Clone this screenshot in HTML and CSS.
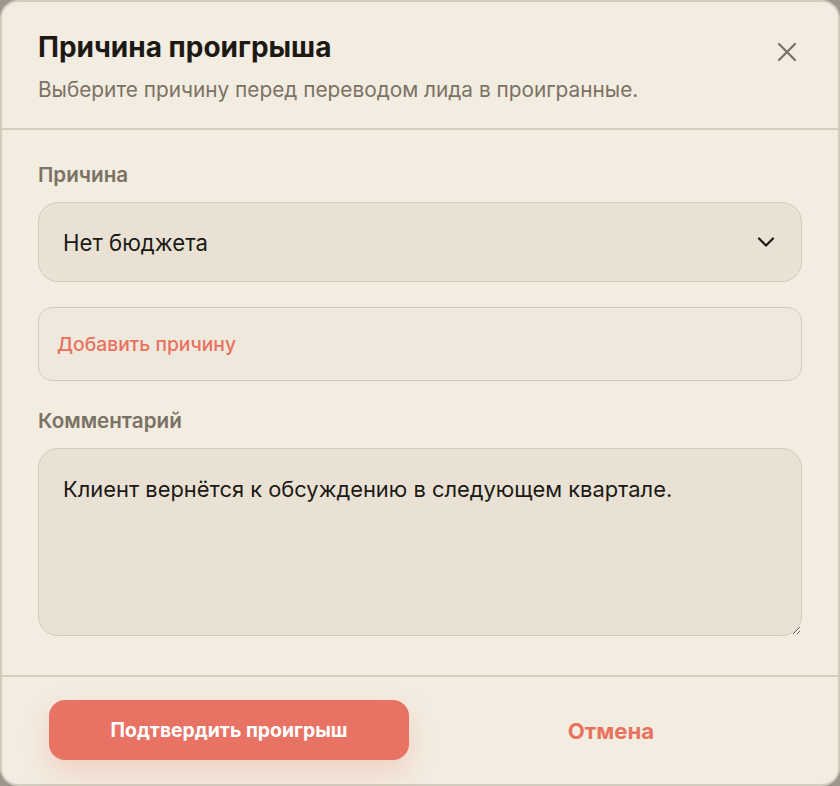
FILE: index.html
```html
<!DOCTYPE html>
<html lang="ru">
<head>
    <meta charset="UTF-8">
    <meta name="viewport" content="width=device-width, initial-scale=1.0">
    <title>Причина проигрыша</title>
    <link rel="stylesheet" href="styles.css">
</head>
<body>
    <div class="dialog">
        <div class="dialog-header">
            <div class="header-text">
                <h1>Причина проигрыша</h1>
                <p>Выберите причину перед переводом лида в проигранные.</p>
            </div>
            <button class="close-btn" aria-label="Закрыть">
                <svg width="20" height="20" viewBox="0 0 20 20" fill="none" stroke="currentColor" stroke-width="2.2" stroke-linecap="round">
                    <path d="M2 2 L18 18 M18 2 L2 18"/>
                </svg>
            </button>
        </div>

        <div class="dialog-body">
            <label class="field-label">Причина</label>
            <div class="select">
                <span>Нет бюджета</span>
                <svg width="18" height="10" viewBox="0 0 18 10" fill="none" stroke="currentColor" stroke-width="2.2" stroke-linecap="round" stroke-linejoin="round">
                    <path d="M2 1.5 L9 8.5 L16 1.5"/>
                </svg>
            </div>

            <div class="add-reason">Добавить причину</div>

            <label class="field-label">Комментарий</label>
            <textarea class="comment">Клиент вернётся к обсуждению в следующем квартале.</textarea>
        </div>

        <div class="dialog-footer">
            <div class="footer-col">
                <button class="confirm-btn">Подтвердить проигрыш</button>
            </div>
            <div class="footer-col">
                <button class="cancel-btn">Отмена</button>
            </div>
        </div>
    </div>
</body>
</html>
```

FILE: styles.css
```css
body {
    font-family: Inter, "Noto Sans", sans-serif;
    margin: 0;
    padding: 0;
    background-color: #9c968c;
    color: #1c1915;
    height: 100vh;
    overflow: hidden;
}

.dialog {
    height: 786px;
    box-sizing: border-box;
    background-color: #f3ece0;
    border: 2px solid #d3cbbc;
    border-radius: 18px;
    display: flex;
    flex-direction: column;
}

.dialog-header {
    display: flex;
    justify-content: space-between;
    align-items: flex-start;
    padding: 28px 41px 25px 36px;
    border-bottom: 2px solid #d6cdbd;
}

.dialog-header h1 {
    margin: 0;
    font-size: 28px;
    line-height: 34px;
    font-weight: 700;
    color: #1c1915;
}

.dialog-header p {
    margin: 13px 0 0;
    font-size: 20.8px;
    line-height: 26px;
    color: #7b7266;
}

.close-btn {
    margin-top: 12px;
    padding: 0;
    border: none;
    background: none;
    color: #78716a;
    width: 20px;
    height: 20px;
    cursor: pointer;
}

.dialog-body {
    flex: 1;
    display: flex;
    flex-direction: column;
    padding: 33px 36px 39px;
}

.field-label {
    font-size: 20.6px;
    line-height: 24px;
    font-weight: 600;
    color: #7b7266;
    margin-bottom: 15px;
}

.select {
    height: 80px;
    box-sizing: border-box;
    display: flex;
    align-items: center;
    justify-content: space-between;
    padding: 0 26px 0 24px;
    background-color: #e9e2d4;
    border: 1.5px solid #d3cab9;
    border-radius: 20px;
    font-size: 22.2px;
    color: #1c1915;
}

.select svg {
    color: #1c1915;
}

.add-reason {
    height: 74px;
    box-sizing: border-box;
    display: flex;
    align-items: center;
    margin: 25px 0 28px;
    padding: 0 18px;
    background-color: #efe8dc;
    border: 1.5px solid #d3cab9;
    border-radius: 14px;
    font-size: 19.3px;
    font-weight: 500;
    color: #e9725f;
}

.comment {
    height: 188px;
    box-sizing: border-box;
    padding: 26px 24px;
    background-color: #e9e2d4;
    border: 1.5px solid #d3cab9;
    border-radius: 20px;
    font-family: Inter, "Noto Sans", sans-serif;
    font-size: 21.9px;
    line-height: 28px;
    color: #1c1915;
    outline: none;
}

.dialog-footer {
    display: grid;
    grid-template-columns: 1fr 1fr;
    padding: 23px 36px 0;
    height: 109px;
    box-sizing: border-box;
    border-top: 2px solid #d6cdbd;
}

.footer-col {
    display: flex;
    justify-content: center;
}

.confirm-btn {
    width: 360px;
    height: 60px;
    border: none;
    border-radius: 16px;
    background-color: #e87365;
    color: #fff;
    font-family: Inter, "Noto Sans", sans-serif;
    font-size: 19.4px;
    font-weight: 700;
    box-shadow: 0 12px 26px rgba(232, 115, 101, 0.22);
    cursor: pointer;
}

.cancel-btn {
    height: 60px;
    border: none;
    background: none;
    color: #e9725f;
    font-family: Inter, "Noto Sans", sans-serif;
    font-size: 22.2px;
    font-weight: 700;
    cursor: pointer;
}
```
